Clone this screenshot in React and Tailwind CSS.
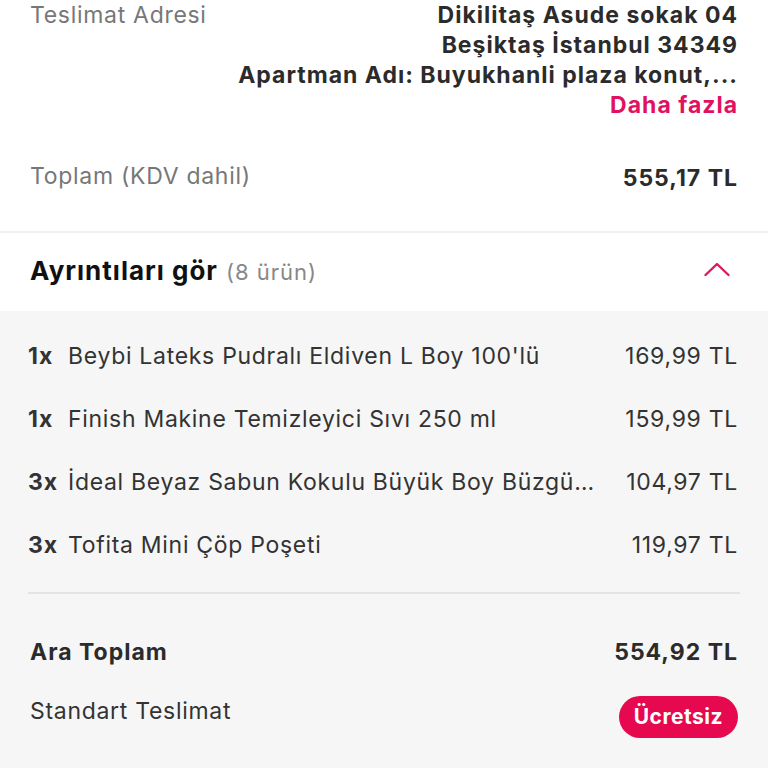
import React from "react";

const items = [
  { qty: "1x", name: "Beybi Lateks Pudralı Eldiven L Boy 100'lü", price: "169,99 TL" },
  { qty: "1x", name: "Finish Makine Temizleyici Sıvı 250 ml", price: "159,99 TL" },
  { qty: "3x", name: "İdeal Beyaz Sabun Kokulu Büyük Boy Büzgülü Çöp Torbası", price: "104,97 TL" },
  { qty: "3x", name: "Tofita Mini Çöp Poşeti", price: "119,97 TL" },
];

export default function App() {
  return (
    <div className="w-[768px] h-[768px] overflow-hidden bg-[#f6f6f6] text-[#333] font-['Inter',sans-serif] tracking-[0.7px]">
      {/* Address + total */}
      <div className="bg-white px-[30px] pb-[35px]">
        <div className="flex justify-between">
          <span className="text-[23px] leading-[30px] text-[#777]">Teslimat Adresi</span>
          <div className="flex flex-col items-end text-right text-[23px] leading-[30px] font-bold tracking-[1px] text-[#2b2b2b]">
            <span>Dikilitaş Asude sokak 04</span>
            <span>Beşiktaş İstanbul 34349</span>
            <span>Apartman Adı: Buyukhanli plaza konut,...</span>
            <span className="text-[#e0115f]">Daha fazla</span>
          </div>
        </div>
        <div className="flex justify-between items-center mt-[37px]">
          <span className="text-[23px] text-[#777]">Toplam (KDV dahil)</span>
          <span className="text-[23px] font-bold tracking-[1px] text-[#2b2b2b] mt-[4px]">555,17 TL</span>
        </div>
      </div>

      {/* Details header */}
      <div className="bg-white border-t-2 border-[#efefef] h-[80px] px-[30px] flex items-center justify-between">
        <div className="flex items-baseline gap-[8px] -mt-[2px]">
          <span className="text-[26px] font-bold tracking-[1px] text-[#111]">Ayrıntıları gör</span>
          <span className="text-[22px] tracking-[1px] text-[#888]">(8 ürün)</span>
        </div>
        <svg width="26" height="15" viewBox="0 0 26 15" className="mr-[8px] -mt-[4px]">
          <path d="M1.5 13 L13 2 L24.5 13" fill="none" stroke="#d81b60" strokeWidth="2.4" strokeLinecap="round" strokeLinejoin="round" />
        </svg>
      </div>

      {/* Items */}
      <div className="px-[28px] pt-[14px]">
        {items.map((it, i) => (
          <div key={i} className="h-[63px] flex items-center text-[23px]">
            <span className="w-[40px] font-bold tracking-[1px] text-[#333]">{it.qty}</span>
            <span className="flex-1 min-w-0 truncate pr-[30px] text-[#333]">{it.name}</span>
            <span className="shrink-0 text-[#333] pr-[2px]">{it.price}</span>
          </div>
        ))}
        <div className="border-t-2 border-[#e4e4e4] mt-[15px]" />
        <div className="flex justify-between items-center mt-[41px] px-[2px]">
          <span className="text-[23px] font-bold tracking-[1px] text-[#2b2b2b]">Ara Toplam</span>
          <span className="text-[23px] font-bold tracking-[1px] text-[#2b2b2b]">554,92 TL</span>
        </div>
        <div className="flex justify-between items-center mt-[27px] px-[2px]">
          <span className="text-[23px] text-[#333] -mt-[12px]">Standart Teslimat</span>
          <span className="h-[42px] px-[15px] rounded-full bg-[#e6094f] text-white text-[21px] font-bold tracking-[0.5px] flex items-center">Ücretsiz</span>
        </div>
      </div>
    </div>
  );
}
